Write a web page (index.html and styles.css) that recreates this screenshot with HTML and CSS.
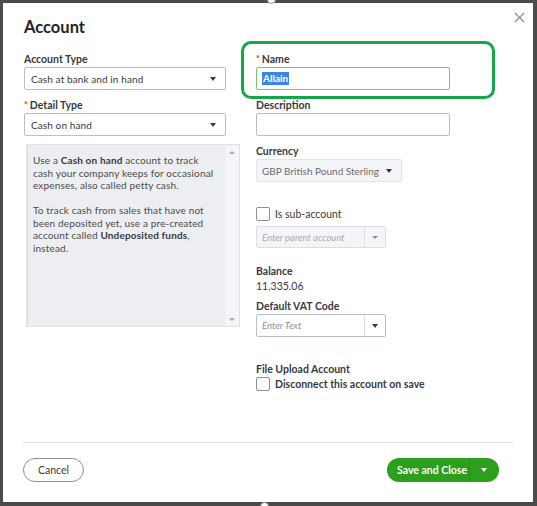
FILE: index.html
```html
<!DOCTYPE html>
<html lang="en">
<head>
    <meta charset="UTF-8">
    <title>Account</title>
    <link rel="stylesheet" href="styles.css">
</head>
<body>
    <div class="dialog">
        <button class="close-btn" aria-label="Close">
            <svg width="11" height="11" viewBox="0 0 11 11"><path d="M1 1L10 10M10 1L1 10" stroke="#8d9096" stroke-width="1.3"/></svg>
        </button>
        <h1 class="title">Account</h1>

        <div class="form-body">
            <div class="col col-left">
                <div class="field">
                    <label class="label">Account Type</label>
                    <div class="select">
                        <span>Cash at bank and in hand</span>
                        <span class="caret"></span>
                    </div>
                </div>
                <div class="field">
                    <label class="label"><span class="req">*</span>Detail Type</label>
                    <div class="select">
                        <span>Cash on hand</span>
                        <span class="caret"></span>
                    </div>
                </div>
                <div class="help-box">
                    <div class="help-text">
                        <p>Use a <b>Cash on hand</b> account to track cash your company keeps for occasional expenses, also called petty cash.</p>
                        <p>To track cash from sales that have not been deposited yet, use a pre-created account called <b>Undeposited funds</b>, instead.</p>
                    </div>
                    <div class="scrollbar">
                        <span class="arrow-up"></span>
                        <span class="arrow-down"></span>
                    </div>
                </div>
            </div>

            <div class="col col-right">
                <div class="highlight"></div>
                <div class="field">
                    <label class="label"><span class="req">*</span>Name</label>
                    <div class="input input-focus"><span class="selected-text">Allain</span></div>
                </div>
                <div class="field">
                    <label class="label">Description</label>
                    <div class="input"></div>
                </div>
                <div class="field">
                    <label class="label">Currency</label>
                    <div class="select select-disabled currency">
                        <span>GBP British Pound Sterling</span>
                        <span class="caret"></span>
                    </div>
                </div>
                <div class="check-row sub-row">
                    <span class="checkbox"></span>
                    <span>Is sub-account</span>
                </div>
                <div class="combo combo-disabled">
                    <span class="placeholder">Enter parent account</span>
                    <span class="combo-btn"><span class="caret caret-light"></span></span>
                </div>
                <div class="field balance">
                    <label class="label">Balance</label>
                    <div class="value">11,335.06</div>
                </div>
                <div class="field">
                    <label class="label">Default VAT Code</label>
                    <div class="combo">
                        <span class="placeholder">Enter Text</span>
                        <span class="combo-btn"><span class="caret"></span></span>
                    </div>
                </div>
                <div class="field upload">
                    <label class="label">File Upload Account</label>
                    <div class="check-row">
                        <span class="checkbox"></span>
                        <span class="strong">Disconnect this account on save</span>
                    </div>
                </div>
            </div>
        </div>

        <div class="footer">
            <button class="btn btn-cancel">Cancel</button>
            <div class="btn-split">
                <button class="btn btn-save">Save and Close</button>
                <button class="btn btn-more"><span class="caret caret-white"></span></button>
            </div>
        </div>
    </div>
    <span class="handle handle-top"></span>
    <span class="handle handle-bottom"></span>
</body>
</html>
```

FILE: styles.css
```css
:root {
    --text: #393a3d;
    --muted: #8d9096;
    --border: #babec5;
    --green: #2ca01c;
}

* {
    box-sizing: border-box;
}

html, body {
    margin: 0;
    height: 100%;
}

body {
    background-color: #4b4b4b;
    font-family: Lato, "Open Sans", sans-serif;
    color: var(--text);
    padding: 3px 4px 4px 3px;
    position: relative;
    overflow: hidden;
}

.dialog {
    position: relative;
    width: 530px;
    height: 499px;
    background: #fff;
    padding: 13px 21px 0 21px;
}

.close-btn {
    position: absolute;
    top: 8px;
    right: 8px;
    border: none;
    background: none;
    padding: 0;
    width: 11px;
    height: 11px;
    cursor: pointer;
}

.title {
    margin: 0;
    font-size: 16.5px;
    line-height: 22px;
    font-weight: 700;
    color: #242424;
    height: 36px;
}

.form-body {
    display: flex;
    gap: 16px;
    height: 390px;
}

.col-left {
    width: 216px;
}

.col-right {
    position: relative;
    width: 200px;
}

.field {
    margin-bottom: 8px;
}

.label {
    display: block;
    font-size: 10.5px;
    line-height: 14px;
    font-weight: 700;
    color: var(--text);
    margin-bottom: 1px;
}

.req {
    color: #d52b1e;
    margin-right: 2px;
    font-size: 9px;
    vertical-align: 1px;
}

.select, .input, .combo {
    height: 23px;
    border: 1px solid var(--border);
    border-radius: 2px;
    font-size: 10px;
    display: flex;
    align-items: center;
    background: #fff;
}

.select {
    width: 202px;
    justify-content: space-between;
    padding: 0 9px 0 6px;
    letter-spacing: 0.1px;
}

.input {
    width: 194px;
    padding: 0 5px;
}

.input-focus {
    border-color: #6fcb6c;
}

.selected-text {
    background: #3b86e8;
    color: #fff;
    font-weight: 700;
    line-height: 13px;
    padding: 0 1px;
}

.caret {
    width: 0;
    height: 0;
    border-left: 3.5px solid transparent;
    border-right: 3.5px solid transparent;
    border-top: 4px solid #393a3d;
}

.caret-light {
    border-top-color: #8d9096;
    border-left-width: 3px;
    border-right-width: 3px;
    border-top-width: 3px;
}

.caret-white {
    border-top-color: #fff;
}

.help-box {
    margin: 3px 0 0 2px;
    width: 214px;
    height: 183px;
    background: #eceef1;
    border: 1px solid #dfe1e5;
    border-left-width: 2px;
    display: flex;
}

.help-text {
    flex: 1;
    padding: 9px 6px 0 5px;
    font-size: 10px;
    letter-spacing: 0.15px;
    line-height: 12.5px;
    color: #4a4b4f;
}

.help-text p {
    margin: 0 0 12.5px 0;
}

.help-text b {
    font-weight: 700;
    color: #393a3d;
}

.scrollbar {
    width: 14px;
    background: #f4f5f8;
    display: flex;
    flex-direction: column;
    justify-content: space-between;
    align-items: center;
    padding: 6px 0 5px;
}

.arrow-up, .arrow-down {
    width: 0;
    height: 0;
    border-left: 3px solid transparent;
    border-right: 3px solid transparent;
}

.arrow-up {
    border-bottom: 3px solid #a8abb0;
}

.arrow-down {
    border-top: 3px solid #a8abb0;
}

.highlight {
    position: absolute;
    left: -15px;
    top: -11px;
    width: 254px;
    height: 58px;
    border: 3px solid #13a74a;
    border-radius: 10px;
    pointer-events: none;
}

.currency {
    width: 146px;
    padding: 0 9px 0 5px;
    letter-spacing: 0;
}

.select-disabled {
    background: #f4f5f8;
    border-color: #e3e5e8;
    color: #6b6c72;
}

.check-row {
    display: flex;
    align-items: center;
    gap: 5px;
    font-size: 10.5px;
    color: var(--text);
}

.sub-row {
    margin-top: 25px;
}

.checkbox {
    width: 14px;
    height: 14px;
    border: 1px solid #8d9096;
    border-radius: 2px;
    background: #fff;
}

.combo {
    width: 130px;
    justify-content: space-between;
    padding-left: 5px;
}

.combo-disabled {
    margin-top: 5px;
    background: #f4f5f8;
    border-color: #dcdee2;
    height: 22px;
}

.combo-disabled .placeholder {
    color: #a8abb0;
}

.placeholder {
    font-style: italic;
    color: var(--muted);
    font-size: 9.5px;
}

.combo-btn {
    width: 21px;
    height: 100%;
    border-left: 1px solid #dcdee2;
    display: flex;
    align-items: center;
    justify-content: center;
}

.balance {
    margin-top: 16px;
    margin-bottom: 6px;
}

.value {
    font-size: 10.5px;
    line-height: 14px;
}

.upload {
    margin-top: 25px;
}

.strong {
    font-weight: 700;
}

.footer {
    border-top: 1px solid #dcdee2;
    margin: 0 -1px;
    padding-top: 15px;
    display: flex;
    justify-content: space-between;
    align-items: center;
}

.btn {
    font-family: inherit;
    font-size: 10.5px;
    height: 24px;
    cursor: pointer;
}

.btn-cancel {
    width: 61px;
    border: 1px solid #8d9096;
    border-radius: 12px;
    background: #fff;
    color: var(--text);
}

.btn-split {
    display: flex;
    margin-right: 14px;
}

.btn-save {
    width: 82px;
    border: none;
    border-radius: 12px 0 0 12px;
    background: var(--green);
    color: #fff;
    font-weight: 700;
    padding: 0 0 0 8px;
}

.btn-more {
    width: 30px;
    border: none;
    border-left: 1px solid #259015;
    border-radius: 0 12px 12px 0;
    background: var(--green);
    display: flex;
    align-items: center;
    justify-content: center;
    padding: 0 2px 0 0;
}

.handle {
    position: absolute;
    width: 9px;
    height: 9px;
    border-radius: 50%;
    background: #fff;
    border: 1px solid #8d9096;
}

.handle-top {
    left: 267px;
    top: -5px;
}

.handle-bottom {
    left: 260px;
    bottom: -5px;
}
```
